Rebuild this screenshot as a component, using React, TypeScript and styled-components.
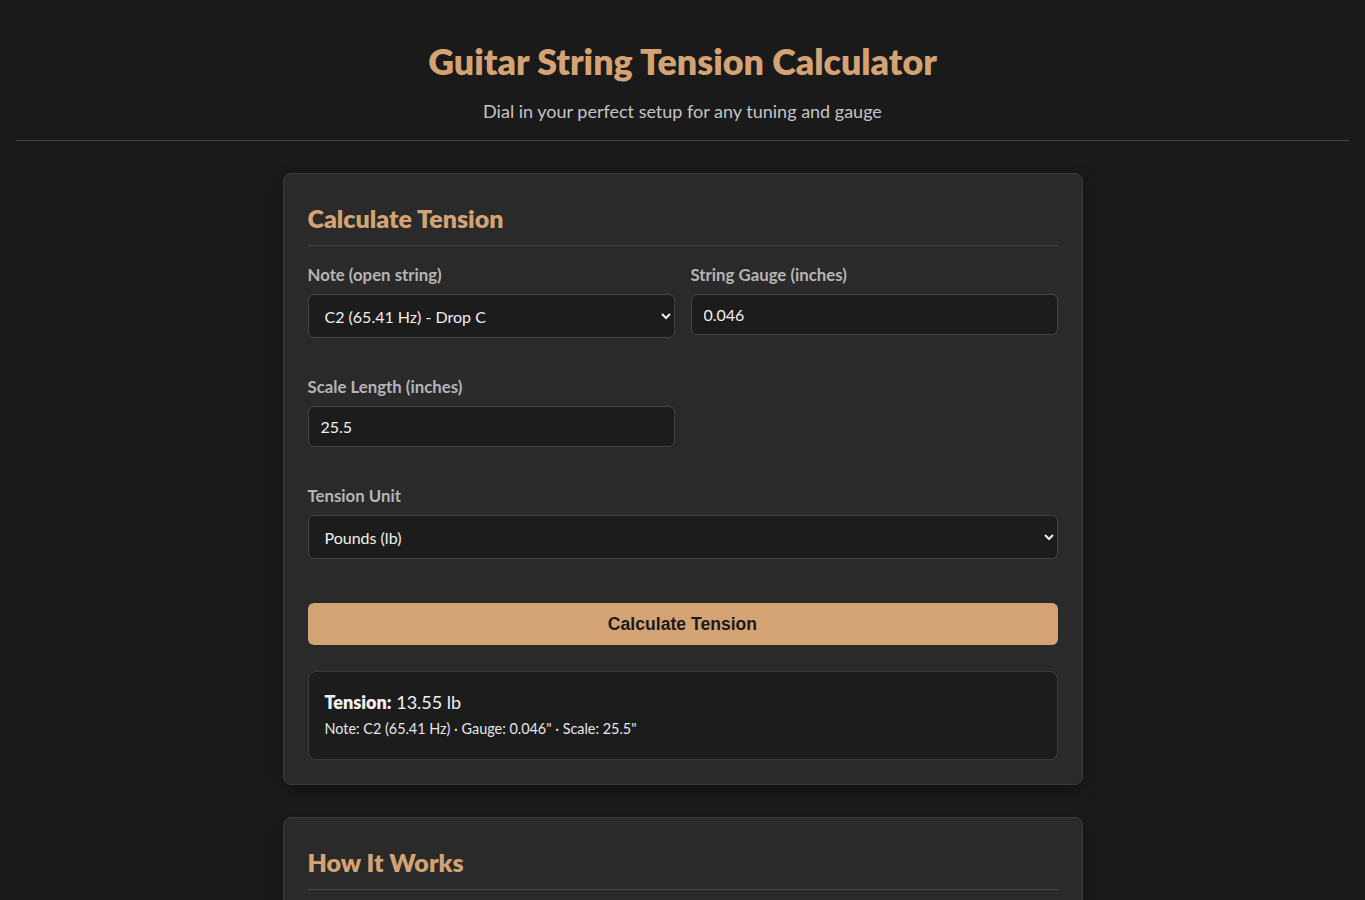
import React, { useState } from "react";
import styled, { createGlobalStyle } from "styled-components";

const GlobalStyle = createGlobalStyle`
  html, body {
    margin: 0;
    padding: 0;
    background: #1a1a1a;
  }
  body {
    font-family: "Segoe UI", Lato, "Open Sans", sans-serif;
    color: #e6e6e6;
    color-scheme: dark;
  }
  * { box-sizing: border-box; }
`;

const Page = styled.div`
  min-height: 100vh;
  padding-bottom: 40px;
`;

const Header = styled.header`
  margin: 0 16px;
  padding: 39px 0 16px;
  border-bottom: 1px solid #444;
  text-align: center;
`;

const Title = styled.h1`
  margin: 0;
  font-size: 35.8px;
  line-height: 46px;
  font-weight: 800;
  color: #d4a373;
`;

const Subtitle = styled.p`
  margin: 13px 0 0;
  font-size: 18px;
  line-height: 26px;
  color: #c4c4c4;
`;

const Main = styled.main`
  width: 800px;
  margin: 32px auto 0;
  display: flex;
  flex-direction: column;
  gap: 32px;
`;

const Card = styled.section`
  background: #2a2a2a;
  border: 1px solid #3b3b3b;
  border-radius: 8px;
  padding: 23px 24px 24px;
  box-shadow: 0 4px 14px rgba(0, 0, 0, 0.35);
`;

const CardTitle = styled.h2`
  margin: 0 0 18px;
  padding: 0 0 6px;
  font-size: 25px;
  line-height: 42px;
  font-weight: 800;
  color: #d4a373;
  border-bottom: 1px solid #444;
`;

const Row = styled.div`
  display: grid;
  grid-template-columns: 1fr 1fr;
  column-gap: 16px;
  margin-bottom: 38px;
`;

const Field = styled.div`
  display: flex;
  flex-direction: column;
  align-items: stretch;
  align-self: start;
`;

const Label = styled.label`
  display: block;
  font-size: 16.8px;
  line-height: 22px;
  font-weight: 700;
  color: #b5b5b5;
  margin-bottom: 8px;
`;

const Select = styled.select`
  width: 100%;
  height: 44px;
  padding: 0 12px;
  font-family: inherit;
  font-size: 16px;
  color: #f0f0f0;
  background: #1c1c1c;
  border: 1px solid #444;
  border-radius: 6px;
  color-scheme: dark;
  outline: none;
`;

const Input = styled.input`
  width: 100%;
  height: 41px;
  padding: 0 12px;
  font-family: inherit;
  font-size: 16px;
  color: #f0f0f0;
  background: #1c1c1c;
  border: 1px solid #444;
  border-radius: 6px;
  outline: none;
`;

const Button = styled.button`
  display: block;
  width: 100%;
  height: 42px;
  margin-top: 44px;
  border: none;
  border-radius: 6px;
  background: #d4a373;
  color: #1a1a1a;
  font-family: "Liberation Sans", Arial, sans-serif;
  font-size: 17.6px;
  font-weight: 700;
  cursor: pointer;
`;

const Result = styled.div`
  margin-top: 26px;
  padding: 17px 16px 20px;
  background: #1c1c1c;
  border: 1px solid #3b3b3b;
  border-radius: 8px;
`;

const ResultMain = styled.div`
  font-size: 18px;
  line-height: 26px;
  color: #f2f2f2;
  strong { font-weight: 800; }
`;

const ResultMeta = styled.div`
  margin-top: 4px;
  font-size: 14.4px;
  line-height: 20px;
  color: #e6e6e6;
`;

export default function App() {
  const [note, setNote] = useState("C2");
  const [gauge, setGauge] = useState("0.046");
  const [scale, setScale] = useState("25.5");
  const [unit, setUnit] = useState("lb");

  return (
    <Page>
      <GlobalStyle />
      <Header>
        <Title>Guitar String Tension Calculator</Title>
        <Subtitle>Dial in your perfect setup for any tuning and gauge</Subtitle>
      </Header>
      <Main>
        <Card>
          <CardTitle>Calculate Tension</CardTitle>
          <Row>
            <Field>
              <Label htmlFor="note">Note (open string)</Label>
              <Select id="note" value={note} onChange={(e) => setNote(e.target.value)}>
                <option value="C2">C2 (65.41 Hz) - Drop C</option>
                <option value="D2">D2 (73.42 Hz) - Drop D</option>
                <option value="E2">E2 (82.41 Hz) - Standard Low E</option>
              </Select>
            </Field>
            <Field>
              <Label htmlFor="gauge">String Gauge (inches)</Label>
              <Input id="gauge" value={gauge} onChange={(e) => setGauge(e.target.value)} />
            </Field>
          </Row>
          <Row>
            <Field>
              <Label htmlFor="scale">Scale Length (inches)</Label>
              <Input id="scale" value={scale} onChange={(e) => setScale(e.target.value)} />
            </Field>
          </Row>
          <Field>
            <Label htmlFor="unit">Tension Unit</Label>
            <Select id="unit" value={unit} onChange={(e) => setUnit(e.target.value)}>
              <option value="lb">Pounds (lb)</option>
              <option value="kg">Kilograms (kg)</option>
              <option value="n">Newtons (N)</option>
            </Select>
          </Field>
          <Button type="button">Calculate Tension</Button>
          <Result>
            <ResultMain>
              <strong>Tension:</strong> 13.55 lb
            </ResultMain>
            <ResultMeta>Note: C2 (65.41 Hz) · Gauge: 0.046" · Scale: 25.5"</ResultMeta>
          </Result>
        </Card>
        <Card>
          <CardTitle>How It Works</CardTitle>
        </Card>
      </Main>
    </Page>
  );
}
